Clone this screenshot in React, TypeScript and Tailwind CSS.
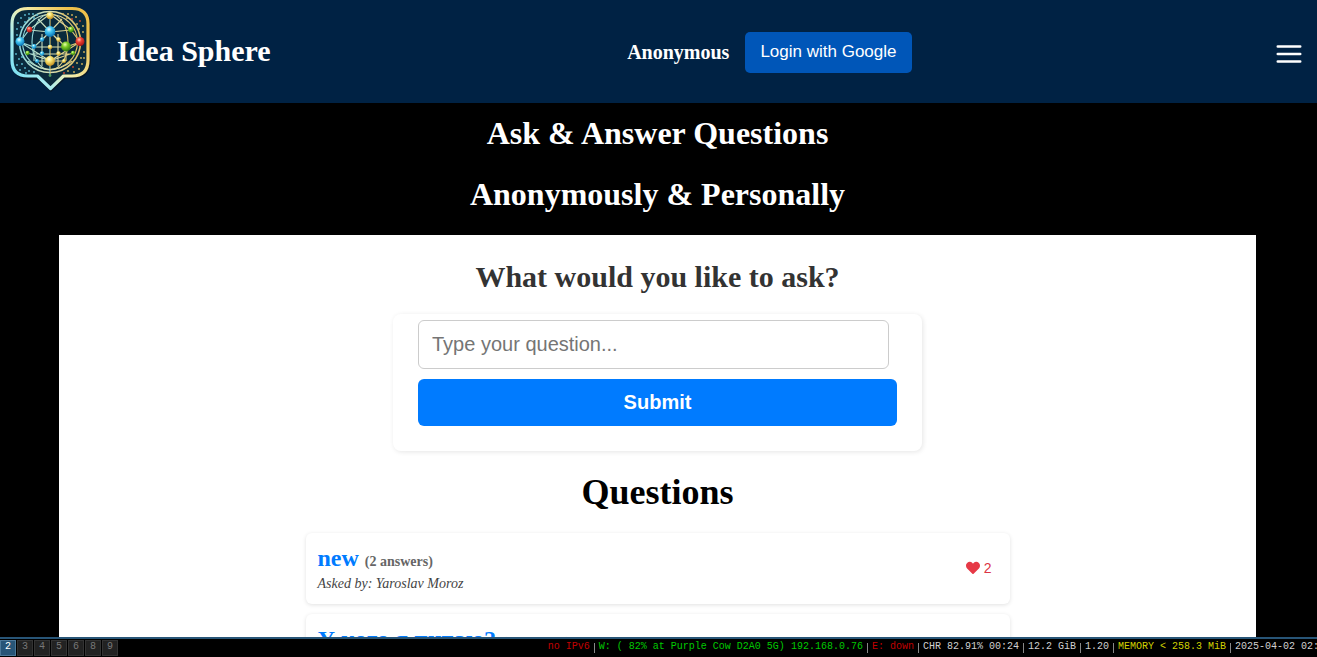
import React from "react";

const serif = "font-['Liberation_Serif',serif]";
const sans = "font-['Liberation_Sans',sans-serif]";

type Node = [x: number, y: number, r: number, fill: string];

const nodes: Node[] = [
  [50, 15.5, 3.6, "url(#yellow)"],
  [29.5, 29.5, 2.9, "url(#red)"],
  [71, 29.5, 2.9, "url(#green)"],
  [50, 31.5, 5.4, "url(#blue)"],
  [20, 41.5, 4.5, "url(#blue)"],
  [80, 41.5, 4.5, "url(#red)"],
  [66, 46.5, 4.9, "url(#green)"],
  [50, 61, 4.9, "url(#yellow)"],
  [42, 39.5, 2.2, "url(#blue)"],
  [58.5, 39.5, 2.2, "url(#yellow)"],
  [34, 46.5, 2.4, "url(#blue)"],
  [50, 47, 2.3, "url(#yellow)"],
  [27.5, 53, 2.2, "url(#green)"],
  [42, 53.5, 2.2, "url(#blue)"],
  [58.5, 53.5, 2.2, "url(#yellow)"],
  [73, 53, 2.2, "url(#green)"],
  [37, 61, 2, "url(#blue)"],
  [64, 61, 2, "url(#yellow)"],
  [50, 75.5, 1.4, "#4f9a62"],
];

const coolDots = [
  [18, 23], [21, 18], [25, 15], [29, 14], [33, 14], [17, 29], [21, 27], [25, 22],
  [29, 18], [17, 35], [16, 54], [19, 59], [22, 64], [25, 68], [29, 71], [17, 65],
  [20, 70], [26, 73], [34, 72], [22, 57], [37, 15], [34, 18],
];
const warmDots = [
  [63, 14], [68, 14], [72, 15], [76, 17], [80, 21], [83, 26], [83, 32], [77, 24],
  [79, 29], [72, 19], [67, 18], [84, 52], [81, 58], [77, 63], [73, 67], [68, 71],
  [82, 64], [79, 69], [74, 72], [64, 73], [84, 58],
];

function Logo() {
  return (
    <svg viewBox="0 0 110 104" className="h-[104px] w-[110px] shrink-0" role="img" aria-label="Idea Sphere logo">
      <defs>
        <linearGradient id="frame" x1="0" y1="0.9" x2="0.9" y2="0.2">
          <stop offset="0" stopColor="#6fdcf2" />
          <stop offset="0.3" stopColor="#a9edf0" />
          <stop offset="0.55" stopColor="#f3efb0" />
          <stop offset="1" stopColor="#edc04c" />
        </linearGradient>
        <linearGradient id="mesh">
          <stop offset="0" stopColor="#8ed7dc" />
          <stop offset="0.5" stopColor="#d9dfb4" />
          <stop offset="1" stopColor="#dfbe62" />
        </linearGradient>
        <radialGradient id="blue" cx="0.4" cy="0.3" r="0.7">
          <stop offset="0" stopColor="#e6fcff" />
          <stop offset="0.4" stopColor="#42c6f2" />
          <stop offset="1" stopColor="#0873b5" />
        </radialGradient>
        <radialGradient id="red" cx="0.4" cy="0.3" r="0.7">
          <stop offset="0" stopColor="#ffc8b0" />
          <stop offset="0.4" stopColor="#ed4134" />
          <stop offset="1" stopColor="#a51616" />
        </radialGradient>
        <radialGradient id="green" cx="0.4" cy="0.3" r="0.7">
          <stop offset="0" stopColor="#eaffae" />
          <stop offset="0.4" stopColor="#7ccb25" />
          <stop offset="1" stopColor="#2f7911" />
        </radialGradient>
        <radialGradient id="yellow" cx="0.4" cy="0.3" r="0.7">
          <stop offset="0" stopColor="#fffde0" />
          <stop offset="0.4" stopColor="#f7e36f" />
          <stop offset="1" stopColor="#c49024" />
        </radialGradient>
      </defs>
      <path d="M28 9H73Q91 9 91 26V60Q91 77 76 79H65L51 92L38 80H28Q12 78 12 62V24Q12 9 28 9Z" fill="#07131f" opacity="0.75" />
      <path d="M28 8.5H72Q88 8.5 88 24V60Q88 76 72 76H63.5L50.5 88.5L37.5 76H28Q12 76 12 60V24Q12 8.5 28 8.5Z" fill="#0a2a3c" stroke="url(#frame)" strokeWidth="3.2" strokeLinejoin="round" />
      <g fill="none" stroke="url(#mesh)">
        <circle cx="50" cy="42" r="30.5" strokeWidth="1.6" />
        <circle cx="50" cy="42" r="27.5" strokeWidth="1.1" />
        <ellipse cx="50" cy="42" rx="18" ry="28" strokeWidth="1.1" />
        <path strokeWidth="1.1" d="M50 14L29 30L20 42L34 47L50 32L66 47L80 42L71 30L50 14M29 30L50 32L71 30M20 42L50 61L80 42M28 53L50 61L73 53M34 47V61M42 34V66M58 34V66M66 47V61M34 47H66M30 54H70M35 61H65M38 19L58 40M62 19L42 40M28 61Q50 78 72 61" />
        <path strokeWidth="1.1" d="M49.99 14L50.01 76" />
      </g>
      {coolDots.map(([x, y]) => (
        <circle key={`${x}-${y}`} cx={x} cy={y} r="0.9" fill="#5fbfd6" />
      ))}
      {warmDots.map(([x, y], i) => (
        <circle key={`${x}-${y}`} cx={x} cy={y} r="0.9" fill={i % 5 === 4 ? "#d94b32" : "#d6b85c"} />
      ))}
      {nodes.map(([x, y, r, fill]) => (
        <circle key={`${x}-${y}`} cx={x} cy={y} r={r} fill={fill} />
      ))}
    </svg>
  );
}

function Header() {
  return (
    <header className="flex h-[103px] shrink-0 items-center justify-between bg-[#002244] pr-[15px] text-white">
      <div className="flex items-center gap-[7px]">
        <Logo />
        <span className="pb-0.5 text-[30px] font-bold">Idea Sphere</span>
      </div>
      <div className="flex items-center gap-4 pt-px">
        <span className="text-xl font-bold">Anonymous</span>
        <button type="button" className={`h-[41px] rounded-[5px] bg-[#0056b8] px-[15px] text-[17px] ${sans}`}>
          Login with Google
        </button>
      </div>
      <button type="button" aria-label="Menu" className="mt-1 pl-2">
        <svg viewBox="0 0 26 20" className="h-5 w-[26px]" stroke="#fff" strokeWidth="2.6" strokeLinecap="round">
          <path d="M1.8 2.5H24.2M1.8 10H24.2M1.8 17.5H24.2" />
        </svg>
      </button>
    </header>
  );
}

function AskForm() {
  return (
    <form
      onSubmit={(e) => e.preventDefault()}
      className={`mx-auto mt-[19px] flex w-[529px] max-w-full flex-col gap-[10px] rounded-lg px-[25px] pt-[6px] pb-[25px] text-xl shadow-[1px_1px_5px_rgba(0,0,0,0.1)] ${sans}`}
    >
      <input
        type="text"
        aria-label="Your question"
        placeholder="Type your question..."
        className="mr-2 h-[49px] rounded-md border border-[#ccc] bg-white px-[13px] placeholder:text-[#757575]"
      />
      <button type="submit" className="h-[47px] rounded-md bg-[#007bff] pb-0.5 font-bold text-white">
        Submit
      </button>
    </form>
  );
}

function Question({ title, answers, author, likes }: { title: string; answers: number; author: string; likes: number }) {
  return (
    <li className="flex h-[71px] items-center justify-between rounded-md pr-[18px] pl-3 shadow-[0_1px_4px_rgba(0,0,0,0.12)]">
      <div>
        <h3 className="text-2xl leading-7 font-bold">
          <a href="#question" className="text-[#007bff]">
            {title}
          </a>{" "}
          <span className="text-sm text-[#666]">({answers} answers)</span>
        </h3>
        <p className="mt-0.5 text-sm leading-5 text-[#444] italic">Asked by: {author}</p>
      </div>
      <button type="button" aria-label={`Like, ${likes}`} className={`flex items-center gap-1 pb-0.5 text-sm text-[#dc3545] ${sans}`}>
        <svg viewBox="0 0 512 512" className="size-[14px]" fill="#e63946">
          <path d="M462.3 62.6C407.5 15.9 326 24.3 275.7 76.2L256 96.5l-19.7-20.3C186.1 24.3 104.5 15.9 49.7 62.6c-62.8 53.6-66.1 149.8-9.900 207.900l193.500 199.800c12.500 12.900 32.800 12.900 45.300 0l193.500-199.800c56.300-58.100 53-154.300-9.800-207.900z" />
        </svg>
        {likes}
      </button>
    </li>
  );
}

const workspaces = [2, 3, 4, 5, 6, 8, 9];

const status: { text: string; color: string }[] = [
  { text: "no IPv6", color: "text-[#c00000]" },
  { text: "W: ( 82% at Purple Cow D2A0 5G) 192.168.0.76", color: "text-[#00c800]" },
  { text: "E: down", color: "text-[#c00000]" },
  { text: "CHR 82.91% 00:24", color: "text-[#d0d0d0]" },
  { text: "12.2 GiB", color: "text-[#d0d0d0]" },
  { text: "1.20", color: "text-[#d0d0d0]" },
  { text: "MEMORY < 258.3 MiB", color: "text-[#d0d000]" },
  { text: "2025-04-02 02:", color: "text-[#d0d0d0]" },
];

function StatusBar() {
  return (
    <footer className="flex h-5 shrink-0 justify-between overflow-hidden border-t-2 border-[#285577] bg-black font-['Liberation_Mono',monospace] text-[10px] leading-4">
      <nav className="flex gap-px pt-px" aria-label="Workspaces">
        {workspaces.map((n) => (
          <button
            key={n}
            type="button"
            className={
              n === 2
                ? "h-4 w-4 border border-[#4c7899] bg-[#285577] pb-0.5 leading-[10px] text-white"
                : "h-4 w-4 border border-[#333] bg-[#222] pb-0.5 leading-[10px] text-[#777]"
            }
          >
            {n}
          </button>
        ))}
      </nav>
      <div className="-mr-0.5 flex whitespace-pre">
        {status.map(({ text, color }, i) => (
          <React.Fragment key={text}>
            {i > 0 && <span className="mx-1 mt-1 h-[10px] w-px bg-[#888]" />}
            <span className={color}>{text}</span>
          </React.Fragment>
        ))}
      </div>
    </footer>
  );
}

export default function App() {
  return (
    <div className={`flex h-screen flex-col bg-black ${serif}`}>
      <div className="flex min-h-0 flex-1 flex-col overflow-hidden">
        <Header />
        <div className="pt-3 pr-0.5 text-center text-[32px] leading-[37px] font-bold text-white">
          <h1>Ask &amp; Answer Questions</h1>
          <h1 className="mt-6">Anonymously &amp; Personally</h1>
        </div>
        <main className="mt-[22px] mr-[61px] ml-[59px] shrink-0 bg-white pt-[23px] pb-6">
          <h2 className="text-center text-[30px] leading-[37px] font-bold text-[#333]">What would you like to ask?</h2>
          <AskForm />
          <h2 className="mt-5 text-center text-4xl leading-[42px] font-bold text-black">Questions</h2>
          <ul className="mx-auto mt-5 flex w-[704px] max-w-full flex-col gap-[10px]">
            <Question title="new" answers={2} author="Yaroslav Moroz" likes={2} />
            <Question title="У кого я питаю?" answers={1} author="Anonymous" likes={1} />
          </ul>
        </main>
      </div>
      <StatusBar />
    </div>
  );
}
